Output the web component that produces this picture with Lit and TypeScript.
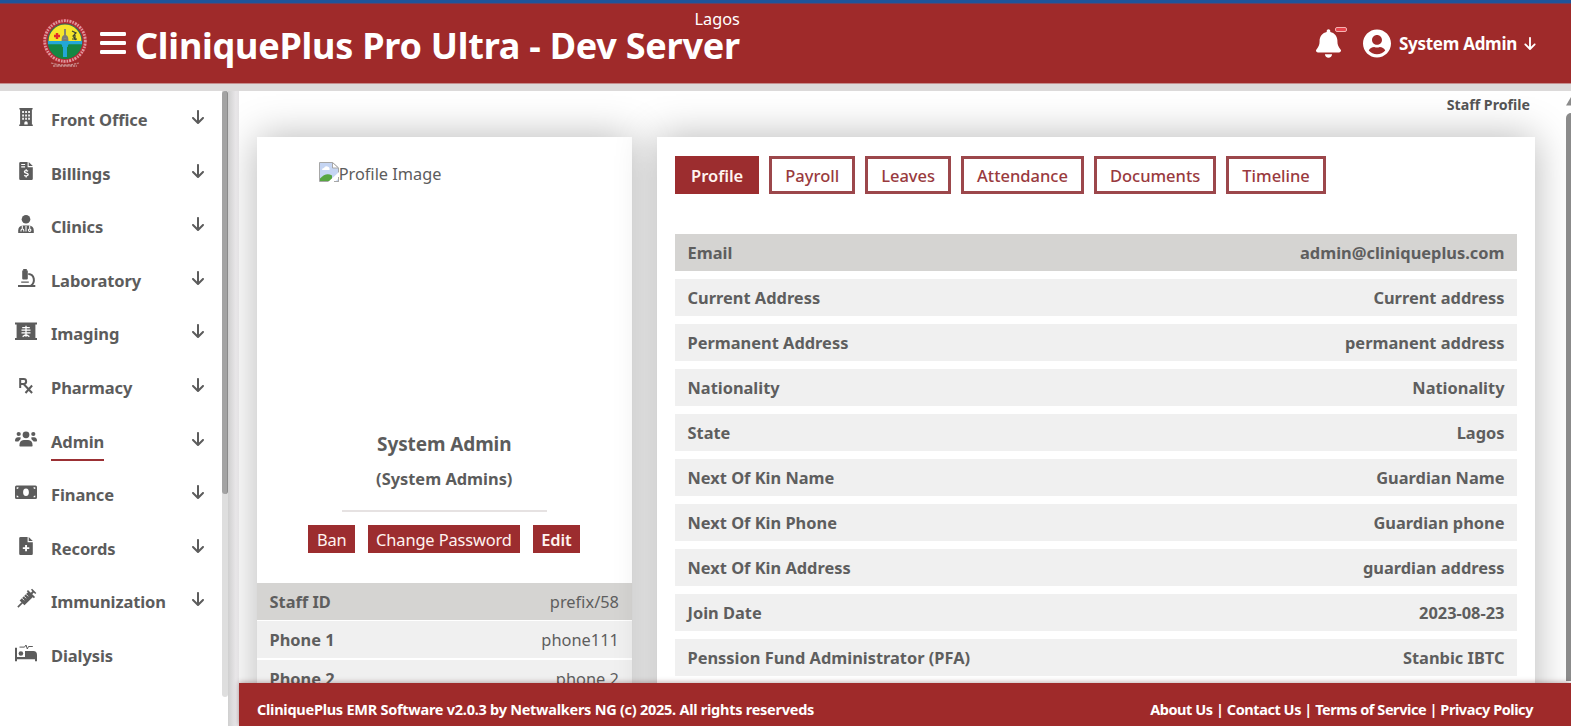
import { LitElement, html, svg, css, nothing } from "lit";
import { customElement, property } from "lit/decorators.js";
import { classMap } from "lit/directives/class-map.js";

const ARROW =
  "M169.4 470.6c12.5 12.5 32.8 12.5 45.3 0l160-160c12.5-12.5 12.5-32.8 0-45.3s-32.8-12.5-45.3 0L224 370.8 224 64c0-17.7-14.3-32-32-32s-32 14.3-32 32l0 306.7L54.6 265.4c-12.5-12.5-32.8-12.5-45.3 0s-12.5 32.8 0 45.3l160 160z";
const BELL =
  "M224 0c-17.7 0-32 14.3-32 32V51.2C119 66 64 130.6 64 208v18.8c0 47-17.3 92.4-48.5 127.6l-7.4 8.3c-8.4 9.4-10.4 22.9-5.3 34.4S19.4 416 32 416H416c12.6 0 24-7.4 29.2-18.9s3.1-25-5.3-34.4l-7.4-8.3C401.3 319.2 384 273.9 384 226.8V208c0-77.4-55-142-128-156.8V32c0-17.7-14.3-32-32-32zm45.3 493.3c12-12 18.7-28.3 18.7-45.3H224 160c0 17 6.7 33.3 18.7 45.3s28.3 18.7 45.3 18.7s33.3-6.7 45.3-18.7z";
const USER =
  "M248 8C111 8 0 119 0 256s111 248 248 248 248-111 248-248S385 8 248 8zm0 96c48.6 0 88 39.4 88 88s-39.4 88-88 88-88-39.4-88-88 39.4-88 88-88zm0 344c-58.7 0-111.3-26.6-146.5-68.2 18.8-35.4 55.6-59.8 98.5-59.8 2.4 0 4.8.4 7.1 1.1 13 4.2 26.6 6.9 40.9 6.9 14.3 0 28-2.7 40.9-6.9 2.3-.7 4.7-1.1 7.1-1.1 42.9 0 79.7 24.4 98.5 59.8C359.3 421.4 306.7 448 248 448z";

// Menu glyphs share a 22x18 box.
const glyphs: Record<string, unknown> = {
  building: svg`<path fill-rule="evenodd" d="M4.4 0h13.2v1.4h-.7v15.2h.9V18H4.2v-1.4h.9V1.4h-.7zM7.2 3v2h1.7V3zm3 0v2h1.7V3zm3 0v2h1.7V3zM7.2 6.4v2h1.7v-2zm3 0v2h1.7v-2zm3 0v2h1.7v-2zM7.2 9.8v2h1.7v-2zm3 0v2h1.7v-2zm3 0v2h1.7v-2zM9.3 16.6h3.4V15a1.7 1.7 0 0 0-3.4 0z"/>`,
  bill: svg`<path fill-rule="evenodd" d="M5.6 0h7v5.2h5.2v11.6q0 1.2-1.2 1.2H5.4q-1.2 0-1.2-1.2V1.2Q4.2 0 5.600 0zM6.200 2v1.100h3.900V2zm0 2.300v1.100h3.900V4.300zM13.700 0l4.100 4.100h-4.100z"/><path d="M13 9.200c-1-.9-3.600-.9-3.600.6 0 1.700 3.800 1 3.800 2.800 0 1.600-2.900 1.600-3.900.6M11.200 7.300v1.500M11.200 13.800v1.700" fill="none" stroke="#fff" stroke-width="1.300"/>`,
  doctor: svg`<circle cx="11" cy="4.300" r="4.300"/><path d="M3.200 18v-2.600q0-4.500 4.700-5h6.200q4.700.5 4.700 5V18z"/><path d="M6 16.600v-1.200q0-1.400 1.400-1.400t1.400 1.400v1.200M7.300 10.500v3M14.700 10.500v3M11 11v5.500M14.600 14a1.200 1.200 0 1 0 .1 0" fill="none" stroke="#fff" stroke-width="1.100"/>`,
  microscope: svg`<path d="M7.200 1.400h1V0h3.600v1.400h1v8.200q0 1-1 1H8.200q-1 0-1-1zM6.200 12.400h7.600v1.300H6.200zM3 16.100h17.300V18H3z"/><path d="M13.300 5c6.500.4 7.200 8.400 2.700 11.600" fill="none" stroke="currentColor" stroke-width="2"/>`,
  xray: svg`<path d="M0 .4h22v2H0zM1.600 2.400h18.800V16H1.600zM0 16h22v2H0z"/><path d="M11 3.800v11M7.200 5.600h7.600M6.500 8.200h9M6.500 10.800h9M7.600 14.600l3.400-2.200 3.400 2.200" fill="none" stroke="#fff" stroke-width="1.300"/>`,
  rx: svg`<path d="M5.200 12V3.100h3.500a2.400 2.400 0 0 1 0 4.900H5.200M8.600 8l8.500 9M17.100 9.500l-6.600 7.500" fill="none" stroke="currentColor" stroke-width="2"/>`,
  users: svg`<circle cx="11" cy="4.800" r="3.400"/><circle cx="3.700" cy="4" r="2.100"/><circle cx="18.300" cy="4" r="2.100"/><path d="M4.400 15.800q0-5.600 4.400-5.800h4.400q4.400.2 4.400 5.800 0 .7-.7.7H5.100q-.7 0-.7-.7zM0 10.500q0-3 3-3.200h2.600q.4 2-.7 2.800-1.200.8-1.500 1.500H.8q-.8 0-.8-1.100zM22 10.500q0-3-3-3.200h-2.600q-.4 2 .7 2.800 1.200.8 1.500 1.500h2.600q.8 0 .8-1.100z"/>`,
  money: svg`<path fill-rule="evenodd" d="M1.500 2.500h19q1.500 0 1.500 1.500v10.500q0 1.500-1.500 1.500h-19Q0 16 0 14.500V4q0-1.500 1.500-1.500zM11 5.500c-2 0-2.900 1.700-2.900 3.800S9 13 11 13s2.900-1.600 2.900-3.700S13 5.500 11 5.500zM1.700 4.200v1.900q1.900 0 1.900-1.900zm0 10.100h1.900q0-1.900-1.900-1.900zM20.300 4.200h-1.900q0 1.900 1.900 1.900zm0 10.100v-1.900q-1.900 0-1.900 1.900z"/>`,
  record: svg`<path fill-rule="evenodd" d="M5.600 0h7v5.200h5.200v11.600q0 1.200-1.200 1.200H5.400q-1.200 0-1.200-1.200V1.200Q4.200 0 5.600 0zM10.100 8v2.200H7.800v1.900h2.300v2.200H12v-2.200h2.300v-1.900H12V8zM13.700 0l4.100 4.100h-4.100z"/>`,
  syringe: svg`<g transform="rotate(45 11 9)"><path d="M10.200 13.500h1.600V20.500h-1.600zM7.600 2.600h6.800v12H7.600zM6 1.200h10v1.700H6zM10-1.500h2v3h-2zM8-2.600h6V-1H8z"/><path d="M7.600 5.600h3M7.600 8.400h3M7.600 11.200h3" stroke="#fff" stroke-width=".8"/></g>`,
  bed: svg`<path d="M0 3.700h2v9.400h8V7h8.300Q22 7.200 22 11v6.300h-2v-2.100H2v2.100H0z"/><circle cx="5.900" cy="9.500" r="2.300"/><path d="M4.500 3.100h5L11 1l1.300 4 1.200-2.500h4.300" fill="none" stroke="currentColor" stroke-width="1"/>`,
};

@customElement("app-header")
class AppHeader extends LitElement {
  static styles = css`
    :host { display: flex; height: 80px; background: #9f2a2a; color: #fff; border-top: 3px solid #1f5499; border-bottom: 1px solid #c58e8e; box-shadow: inset 0 1px #68405f; justify-content: space-between; box-sizing: content-box; }
    .brand { display: flex; padding: 15px 0 0 42px; }
    .logo { width: 46px; height: 50px; }
    .bars { width: 26px; height: 23px; margin: 14px 9px 0 12px; }
    .names { display: flex; flex-direction: column; margin-top: -8px; }
    .title { font-size: 36px; line-height: 30px; font-weight: 700; margin-top: 3px; white-space: nowrap; letter-spacing: -0.24px; }
    .site { align-self: flex-end; font-size: 16.300px; line-height: 18px; }
    .right { display: flex; padding-right: 35px; height: 80px; align-items: center; }
    .alert { position: relative; width: 25px; height: 29px; margin-right: 22px; }
    .bell { width: 25px; height: 29px; }
    .badge { position: absolute; left: 19px; top: -2px; width: 10px; height: 3px; border: 1px solid #f4b3b3; border-radius: 2px; background: #e8434c; }
    .user { width: 28px; height: 29px; margin-right: 8px; }
    .who { font-size: 17px; line-height: 24px; font-weight: 700; letter-spacing: -0.28px; margin-top: 2px; }
    .down { width: 12px; height: 15px; margin-left: 7px; }
  `;
  render() {
    return html`
      <div class="brand">
        <svg class="logo" viewBox="0 0 46 50">
          <circle cx="23" cy="23" r="20" fill="none" stroke="#b62a35" stroke-width="4.500" />
          <circle cx="23" cy="23" r="20.300" fill="none" stroke="#f1d5d4" stroke-width="2.800" stroke-dasharray="1.500 1.200 2 1" opacity=".65" />
          <circle cx="23" cy="23" r="17" fill="#f5e62b" stroke="#356c5b" stroke-width="1.200" />
          <path d="M6 24a17 17 0 0 0 34 0z" fill="#168743" />
          <path d="M6 23h34v3.200H6zM21 25h4v14h-4z" fill="#23a7d8" />
          <path d="M18 25q3 0 3 4M28 25q-3 0-3 4" stroke="#23a7d8" stroke-width="1.500" fill="none" />
          <path d="M15 15v6M12 18h6" stroke="#e22d28" stroke-width="2.400" />
          <path d="M23 11v9M20.500 22q0-4 2.500-4t2.500 4z" stroke="#7b7d77" stroke-width="1.800" fill="#888" />
          <path d="M30 13l4 2-3 3 3 4M33 15v7M30 21h5" stroke="#3c4634" stroke-width="1.200" fill="none" />
          <path d="M9 45q14 4 28 0M11 48h24" stroke="#c98c8c" stroke-width="1.300" stroke-dasharray="2.500 .8" fill="none" />
        </svg>
        <svg class="bars" viewBox="0 0 26 23" fill="#fff"><rect width="26" height="4" rx="1.200" /><rect y="9" width="26" height="4" rx="1.200" /><rect y="18" width="26" height="4" rx="1.200" /></svg>
        <div class="names"><span class="site">Lagos</span><div class="title">CliniquePlus Pro Ultra - Dev Server</div></div>
      </div>
      <div class="right">
        <div class="alert"><svg class="bell" viewBox="0 0 448 512" fill="#fff"><path d=${BELL} /></svg><i class="badge"></i></div>
        <svg class="user" viewBox="0 0 496 512" fill="#fff"><path d=${USER} /></svg>
        <span class="who">System Admin</span>
        <svg class="down" viewBox="0 0 384 512" fill="#fff"><path d=${ARROW} /></svg>
      </div>`;
  }
}

@customElement("side-menu")
class SideMenu extends LitElement {
  static styles = css`
    :host { display: flex; width: 228px; background: #fff; color: #5c5c5c; }
    .list { flex: 1; }
    .item { display: flex; height: 53.6px; padding: 0 18px 0 15px; align-items: flex-start; }
    .glyph { width: 22px; height: 18px; margin: 17px 14px 0 0; overflow: visible; }
    .name { font-size: 16.500px; line-height: 24px; font-weight: 700; letter-spacing: -0.1px; margin-top: 17px; padding-bottom: 5px; border-bottom: 2.500px solid transparent; }
    .current { border-bottom-color: #9b3034; }
    .down { width: 12px; height: 16px; margin: 18px 0 0 auto; }
    .rail { width: 6px; height: 606px; background: #dedede; border-radius: 0 0 3px 3px; }
    .thumb { height: 403px; background: #a3a3a3; border-radius: 3px; border-right: 1px solid #8b8b8b; box-sizing: border-box; }
  `;
  items: [string, string][] = [
    ["building", "Front Office"], ["bill", "Billings"], ["doctor", "Clinics"], ["microscope", "Laboratory"],
    ["xray", "Imaging"], ["rx", "Pharmacy"], ["users", "Admin"], ["money", "Finance"],
    ["record", "Records"], ["syringe", "Immunization"], ["bed", "Dialysis"],
  ];
  render() {
    return html`
      <nav class="list">
        ${this.items.map(([icon, name]) => html`
          <div class="item">
            <svg class="glyph" viewBox="0 0 22 18" fill="currentColor">${glyphs[icon]}</svg>
            <span class=${classMap({ name: true, current: name === "Admin" })}>${name}</span>
            ${name === "Dialysis" ? nothing : html`<svg class="down" viewBox="0 0 384 512" fill="currentColor"><path d=${ARROW} /></svg>`}
          </div>`)}
      </nav>
      <div class="rail"><div class="thumb"></div></div>`;
  }
}

@customElement("info-rows")
class InfoRows extends LitElement {
  @property({ attribute: false }) rows: [string, string][] = [];
  @property({ type: Boolean, reflect: true }) compact = false;
  static styles = css`
    :host { display: flex; flex-direction: column; gap: 8.300px; }
    :host([compact]) { gap: 1.800px; }
    .row { display: flex; flex: none; box-sizing: border-box; justify-content: space-between; height: 36.700px; line-height: 36.700px; padding: 1px 12.500px 0; background: #f0f0f0; font-size: 16.400px; font-weight: 700; color: #5e5e5e; }
    .row:first-child { background: #d5d4d2; }
    :host([compact]) .value { font-weight: 400; }
  `;
  render() {
    return this.rows.map(([k, v]) => html`<div class="row"><span class="key">${k}</span><span class="value">${v}</span></div>`);
  }
}

@customElement("profile-card")
class ProfileCard extends LitElement {
  static styles = css`
    :host { display: flex; flex-direction: column; align-items: center; width: 374.500px; height: 700px; flex: none; background: #fff; box-shadow: 0 0 38px rgba(0, 0, 0, 0.29); color: #5c5c5c; }
    .photo { display: flex; width: 251px; height: 258px; margin-top: 25px; font-size: 16.300px; line-height: 24px; }
    .broken { width: 20px; height: 20px; }
    .name { font-size: 19px; line-height: 28px; font-weight: 700; margin-top: 10px; letter-spacing: -0.1px; }
    .role { font-size: 16.400px; line-height: 24px; font-weight: 700; margin-top: 9px; }
    .rule { width: 205px; height: 2px; background: #e6e2e2; margin-top: 19px; }
    .actions { display: flex; gap: 12.500px; margin: 13px 0 30px; }
    .btn { background: #9c2d2f; color: #fff3f0; height: 28px; line-height: 30px; padding: 0 8.500px; font-size: 16.400px; letter-spacing: -0.12px; }
    .strong { font-weight: 600; }
    info-rows { align-self: stretch; }
  `;
  rows: [string, string][] = [["Staff ID", "prefix/58"], ["Phone 1", "phone111"], ["Phone 2", "phone 2"]];
  render() {
    return html`
      <div class="photo">
        <svg class="broken" viewBox="0 0 20 20">
          <path d="M.5.500h13l6 5.500v13.500H.5z" fill="#c5d5f3" stroke="#a7a7a7" />
          <path d="M13.500.500v5.500h6z" fill="#fff" stroke="#a7a7a7" />
          <path d="M3 8q0-2 2-2 1-2.500 3.500-1.500Q11 5 10.500 8z" fill="#fff" />
          <path d="M1 19v-2.500Q7 10 13 13.500V19z" fill="#57a641" />
          <path d="M20 10L9 20h7l4-4z" fill="#fff" />
          <path d="M15 19.500h4.500V15" fill="none" stroke="#a7a7a7" />
        </svg><span>Profile Image</span>
      </div>
      <div class="name">System Admin</div>
      <div class="role">(System Admins)</div>
      <div class="rule"></div>
      <div class="actions"><span class="btn">Ban</span><span class="btn">Change Password</span><span class="btn strong">Edit</span></div>
      <info-rows compact .rows=${this.rows}></info-rows>`;
  }
}

@customElement("detail-card")
class DetailCard extends LitElement {
  static styles = css`
    :host { display: block; width: 842px; height: 700px; flex: none; padding: 19px 18px 0; background: #fff; box-shadow: 0 0 38px rgba(0, 0, 0, 0.29); }
    .tabs { display: flex; gap: 10px; margin-bottom: 40px; }
    .tab { height: 32px; line-height: 34px; padding: 0 13px; border: 3px solid #9c474b; color: #993a3e; font-size: 16.500px; font-weight: 500; }
    .on { background: #9c2d2f; border-color: #9c2d2f; color: #fff4f0; font-weight: 600; }
  `;
  rows: [string, string][] = [
    ["Email", "admin@cliniqueplus.com"], ["Current Address", "Current address"], ["Permanent Address", "permanent address"],
    ["Nationality", "Nationality"], ["State", "Lagos"], ["Next Of Kin Name", "Guardian Name"], ["Next Of Kin Phone", "Guardian phone"],
    ["Next Of Kin Address", "guardian address"], ["Join Date", "2023-08-23"], ["Penssion Fund Administrator (PFA)", "Stanbic IBTC"],
  ];
  render() {
    return html`
      <div class="tabs">${["Profile", "Payroll", "Leaves", "Attendance", "Documents", "Timeline"].map(
        (t, i) => html`<span class=${classMap({ tab: true, on: i === 0 })}>${t}</span>`)}</div>
      <info-rows .rows=${this.rows}></info-rows>`;
  }
}

@customElement("app-root")
class AppRoot extends LitElement {
  static styles = css`
    :host { display: flex; flex-direction: column; width: 1571px; height: 726px; overflow: hidden; background: #dcdada; font-family: "Noto Sans", "Open Sans", sans-serif; }
    .body { display: flex; flex: 1; min-height: 0; margin-top: 7px; }
    .gutter { width: 11px; background: linear-gradient(90deg, #cfcfcf, #e8e6e8 70%, #e4e2e4); }
    .page { display: flex; flex-direction: column; flex: 1; min-width: 0; }
    .main { display: flex; flex: 1; min-height: 0; overflow: hidden; background: #fff; }
    .content { flex: 1; padding-left: 18px; }
    .crumb { text-align: right; font-size: 14.200px; line-height: 20px; font-weight: 700; color: #555; padding: 4px 36px 0 0; height: 42px; }
    .cards { display: flex; gap: 25.500px; }
    .scroll { width: 5px; display: flex; flex-direction: column; }
    .up { height: 14px; margin: 6px 0 2px; width: 5px; }
    .bar { flex: 1; background: #8b8b8b; border-radius: 5px 0 0 0; margin-bottom: 2px; }
    .foot { display: flex; flex: none; height: 43px; align-items: center; justify-content: space-between; background: #9f2a2a; color: #fff; padding: 9px 38px 0 18px; font-size: 14.500px; font-weight: 700; position: relative; box-shadow: 0 -1px 5px rgba(60, 0, 0, 0.3); box-sizing: border-box; }
    .copy { letter-spacing: -0.26px; }
    .links { letter-spacing: -0.44px; }
  `;
  render() {
    return html`
      <app-header></app-header>
      <div class="body">
        <side-menu></side-menu>
        <div class="gutter"></div>
        <div class="page">
          <div class="main">
            <div class="content">
              <div class="crumb">Staff Profile</div>
              <div class="cards"><profile-card></profile-card><detail-card></detail-card></div>
            </div>
            <div class="scroll">
              <svg class="up" viewBox="0 0 5 14"><path d="M0 8.500L5 0v8.500z" fill="#8b8b8b" /></svg>
              <div class="bar"></div>
            </div>
          </div>
          <footer class="foot">
            <span class="copy">CliniquePlus EMR Software v2.0.3 by Netwalkers NG (c) 2025. All rights reserveds</span>
            <span class="links">About Us | Contact Us | Terms of Service | Privacy Policy</span>
          </footer>
        </div>
      </div>`;
  }
}
